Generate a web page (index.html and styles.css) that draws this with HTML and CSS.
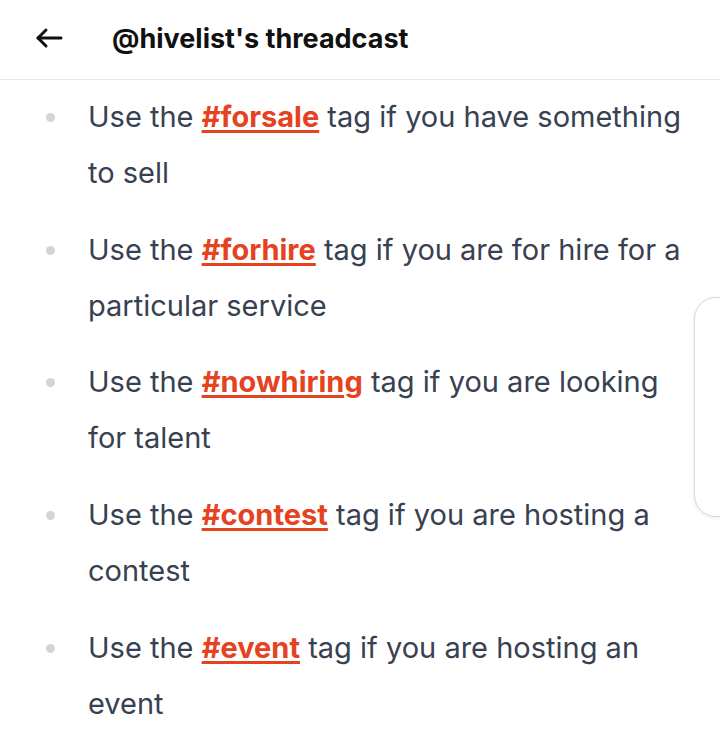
FILE: index.html
```html
<!DOCTYPE html>
<html lang="en">
<head>
    <meta charset="UTF-8">
    <meta name="viewport" content="width=device-width, initial-scale=1.0">
    <title>@hivelist's threadcast</title>
    <link rel="stylesheet" href="styles.css">
</head>
<body>
    <header class="topbar">
        <button class="back" aria-label="Back">
            <svg width="30" height="24" viewBox="0 0 30 24" fill="none" stroke="#111" stroke-width="3" stroke-linecap="round" stroke-linejoin="round">
                <path d="M27 12H4"/>
                <path d="M12 4L4 12L12 20"/>
            </svg>
        </button>
        <h1 class="title">@hivelist's threadcast</h1>
    </header>

    <ul class="tags">
        <li>Use the <a href="#">#forsale</a> tag if you have something to sell</li>
        <li>Use the <a href="#">#forhire</a> tag if you are for hire for a particular service</li>
        <li>Use the <a href="#">#nowhiring</a> tag if you are looking for talent</li>
        <li>Use the <a href="#">#contest</a> tag if you are hosting a contest</li>
        <li>Use the <a href="#">#event</a> tag if you are hosting an event</li>
    </ul>

    <div class="side-card"></div>
</body>
</html>
```

FILE: styles.css
```css
body {
    font-family: Inter, "Noto Sans", sans-serif;
    background-color: #fff;
    margin: 0;
    width: 720px;
    height: 742px;
    overflow: hidden;
    position: relative;
}

.topbar {
    height: 76px;
    padding-bottom: 3px;
    border-bottom: 1px solid #e5e7eb;
    display: flex;
    align-items: center;
    padding-left: 34px;
}

.back {
    background: none;
    border: none;
    padding: 0;
    width: 30px;
    height: 24px;
    margin-right: 48px;
    cursor: pointer;
}

.title {
    margin: 0;
    font-size: 27px;
    font-weight: 700;
    color: #111;
}

.tags {
    list-style: none;
    margin: 0;
    padding: 9px 30px 0 88px;
}

.tags li {
    position: relative;
    font-size: 29px;
    line-height: 56px;
    color: #374151;
    margin-bottom: 20.7px;
}

.tags li::before {
    content: "";
    position: absolute;
    left: -42px;
    top: 24px;
    width: 9px;
    height: 9px;
    border-radius: 50%;
    background-color: #d1d5db;
}

.tags a {
    color: #e5421f;
    font-weight: 700;
    text-decoration: underline;
    text-decoration-thickness: 3px;
    text-underline-offset: 3px;
}

.side-card {
    position: absolute;
    left: 694px;
    top: 297px;
    width: 60px;
    height: 218px;
    border: 1px solid #d8d8d8;
    border-radius: 22px;
    background: #fff;
    box-shadow: 0 1px 4px rgba(0, 0, 0, 0.08);
}
```
